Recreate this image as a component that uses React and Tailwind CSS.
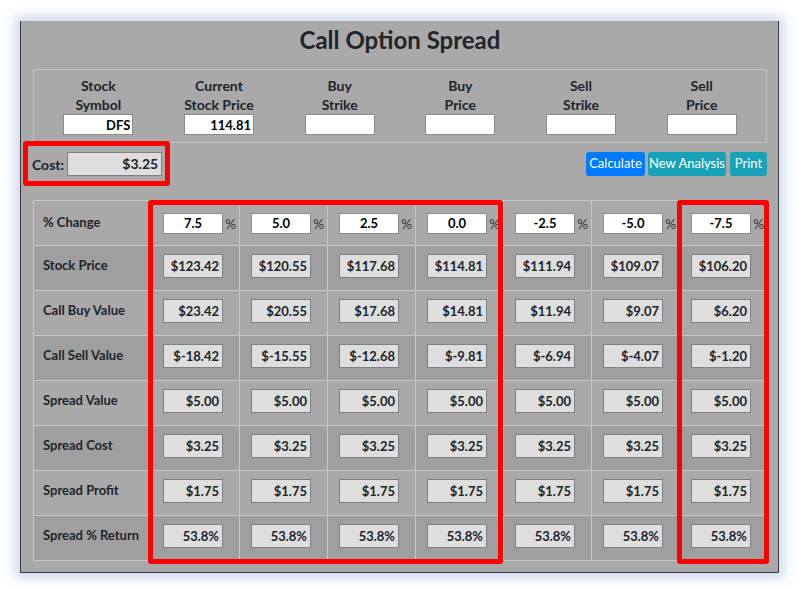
import React from 'react';

const pct = ['7.5', '5.0', '2.5', '0.0', '-2.5', '-5.0', '-7.5'];

const fill = (v) => Array(7).fill(v);

const rows = [
  ['Stock Price', ['$123.42', '$120.55', '$117.68', '$114.81', '$111.94', '$109.07', '$106.20']],
  ['Call Buy Value', ['$23.42', '$20.55', '$17.68', '$14.81', '$11.94', '$9.07', '$6.20']],
  ['Call Sell Value', ['$-18.42', '$-15.55', '$-12.68', '$-9.81', '$-6.94', '$-4.07', '$-1.20']],
  ['Spread Value', fill('$5.00')],
  ['Spread Cost', fill('$3.25')],
  ['Spread Profit', fill('$1.75')],
  ['Spread % Return', fill('53.8%')],
];

const fields = [
  ['Stock', 'Symbol', 'DFS'],
  ['Current', 'Stock Price', '114.81'],
  ['Buy', 'Strike', ''],
  ['Buy', 'Price', ''],
  ['Sell', 'Strike', ''],
  ['Sell', 'Price', ''],
];

export default function App() {
  return (
    <div className="w-[799px] h-[589px] bg-white pt-[21px] pl-[20px]" style={{ fontFamily: 'Lato, "Noto Sans", sans-serif' }}>
      <div className="w-[759px] h-[552px] bg-[#a9a9a9] border-l border-r border-b border-[#3a3a3a] shadow-[0_0_10px_5px_rgba(150,170,225,0.45)] pl-[12px] pr-[11px] text-[#212529]">
        {/* Title */}
        <div className="h-[38px] flex items-center justify-center">
          <h1 className="text-[24px] font-bold leading-none">Call Option Spread</h1>
        </div>

        {/* Inputs */}
        <div className="mt-[10px] h-[74px] border border-[#c2c2c2] px-[4px] pt-[6px] grid grid-cols-6">
          {fields.map(([a, b, v], i) => (
            <div key={i} className="flex flex-col items-center">
              <div className="text-[14px] font-bold leading-[19px] text-center whitespace-nowrap">{a}<br />{b}</div>
              <input
                readOnly
                value={v}
                className="w-[70px] h-[21px] bg-white border border-[#8a8a8a] text-right pr-[2px] text-[13px] font-bold text-black outline-none"
              />
            </div>
          ))}
        </div>

        {/* Cost + buttons */}
        <div className="mt-[9px] h-[24px] flex items-center justify-between">
          <div className="relative flex items-center -ml-[1px]">
            <div className="absolute -left-[9px] -top-[11px] w-[147px] h-[45px] border-[5px] border-[#ff0000] rounded-[3px]" />
            <span className="text-[14px] font-bold">Cost:</span>
            <div className="ml-[3px] w-[95px] h-[24px] bg-[#dedede] border border-[#808080] text-right pr-[3px] text-[14px] font-bold leading-[22px]">$3.25</div>
          </div>
          <div className="flex items-center">
            <button className="w-[59px] h-[24px] rounded-[3px] bg-[#007bff] text-white text-[13px] whitespace-nowrap">Calculate</button>
            <button className="ml-[3px] w-[78px] h-[24px] rounded-[3px] bg-[#17a2b8] text-white text-[13px] whitespace-nowrap">New Analysis</button>
            <button className="ml-[4px] w-[37px] h-[24px] rounded-[3px] bg-[#17a2b8] text-white text-[13px] whitespace-nowrap">Print</button>
          </div>
        </div>

        {/* Table */}
        <div className="relative mt-[24px]">
          <div className="grid grid-cols-[118px_repeat(7,88px)] border-t border-l border-[#c6c6c6]">
            <div className="h-[45px] flex items-center pl-[9px] text-[13px] font-bold border-r border-b border-[#c6c6c6] whitespace-nowrap">% Change</div>
            {pct.map((p, i) => (
              <div key={i} className="h-[45px] flex items-center pl-[11px] border-r border-b border-[#c6c6c6]">
                <input
                  readOnly
                  value={p}
                  className="w-[60px] h-[21px] bg-white border border-[#8a8a8a] text-center text-[13px] font-bold text-black outline-none"
                />
                <span className="ml-[2px] text-[14px] text-[#333]">%</span>
              </div>
            ))}
            {rows.map(([label, vals], r) => (
              <React.Fragment key={label}>
                <div className={`h-[45px] pl-[9px] pt-[10px] text-[13px] font-bold border-r border-b border-[#c6c6c6] whitespace-nowrap ${r % 2 === 0 ? 'bg-[#9f9f9f]' : 'bg-[#a9a9a9]'}`}>{label}</div>
                {vals.map((v, i) => (
                  <div key={i} className={`h-[45px] pl-[11px] pt-[8px] border-r border-b border-[#c6c6c6] ${r % 2 === 0 ? 'bg-[#9f9f9f]' : 'bg-[#a9a9a9]'}`}>
                    <div className="w-[60px] h-[24px] bg-[#dedede] border border-[#808080] text-right pr-[3px] text-[13px] font-bold leading-[22px]">{v}</div>
                  </div>
                ))}
              </React.Fragment>
            ))}
          </div>
          {/* Highlight boxes */}
          <div className="absolute left-[115px] top-0 w-[355px] h-[364px] border-[5px] border-[#ff0000] rounded-[3px]" />
          <div className="absolute left-[644px] top-0 w-[92px] h-[364px] border-[5px] border-[#ff0000] rounded-[3px]" />
        </div>
      </div>
    </div>
  );
}
